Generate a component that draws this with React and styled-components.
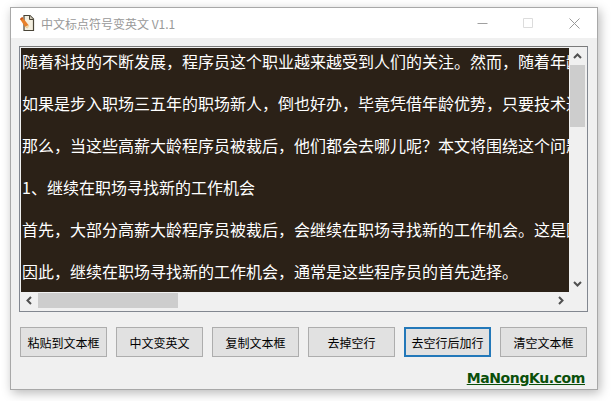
import React from "react";
import styled, { createGlobalStyle } from "styled-components";

const Global = createGlobalStyle`
  html, body { margin: 0; padding: 0; background: #fff; }
  body { width: 613px; height: 401px; overflow: hidden; }
`;

const cjk = `"Noto Sans CJK SC", "Liberation Sans", sans-serif`;

const Page = styled.div`
  width: 613px;
  height: 401px;
  padding: 7px 0 0 10px;
  box-sizing: border-box;
`;

const Win = styled.div`
  width: 588px;
  height: 383px;
  box-sizing: border-box;
  border: 1px solid #a8a8a8;
  background: #f0f0f0;
  box-shadow: 2px 3px 10px rgba(0, 0, 0, 0.28);
  display: flex;
  flex-direction: column;
`;

const TitleBar = styled.div`
  height: 30px;
  background: #fff;
  display: flex;
  align-items: center;
  padding-left: 8px;
  flex-shrink: 0;
`;

const Title = styled.span`
  font-family: ${cjk};
  font-size: 12px;
  color: #999;
  margin-left: 6px;
  flex: 1;
`;

const WinBtn = styled.div`
  width: 46px;
  height: 30px;
  display: flex;
  align-items: center;
  justify-content: center;
  color: #999;
`;

const Body = styled.div`
  flex: 1;
  padding: 8px 9px 0 8px;
  display: flex;
  flex-direction: column;
`;

const TextBox = styled.div`
  height: 266px;
  box-sizing: border-box;
  border: 1px solid #828790;
  border-top-color: #7a7a7a;
  padding: 1px;
  display: grid;
  grid-template-columns: 548px 17px;
  grid-template-rows: 244px 17px;
  background: #f0f0f0;
`;

const Content = styled.div`
  background: #2b2117;
  color: #fff;
  overflow: hidden;
  padding: 0 0 0 1px;
  font-family: ${cjk};
  font-size: 16px;
  line-height: 42px;
  white-space: nowrap;
`;

const Line = styled.div`
  height: 42px;
  &:first-child {
    margin-top: -8px;
  }
`;

const VBar = styled.div`
  display: flex;
  flex-direction: column;
  align-items: center;
  background: #f0f0f0;
`;

const HBar = styled.div`
  display: flex;
  background: #f0f0f0;
`;

const Arrow = styled.div`
  width: 17px;
  height: 17px;
  flex-shrink: 0;
  display: flex;
  align-items: center;
  justify-content: center;
`;

const VThumb = styled.div`
  width: 15px;
  height: 62px;
  background: #cdcdcd;
`;

const HThumb = styled.div`
  width: 140px;
  height: 15px;
  margin-top: 1px;
  background: #cdcdcd;
`;

const Spacer = styled.div`
  flex: 1;
`;

const Buttons = styled.div`
  display: flex;
  gap: 9px;
  margin-top: 15px;
  padding-left: 1px;
`;

const Btn = styled.div`
  width: 87px;
  height: 30px;
  box-sizing: border-box;
  border: ${(p) => (p.$focus ? "2px solid #2378b9" : "1px solid #adadad")};
  background: #e1e1e1;
  display: flex;
  align-items: center;
  justify-content: center;
  font-family: ${cjk};
  font-size: 12px;
  color: #000;
`;

const Footer = styled.div`
  margin-top: 12px;
  text-align: right;
  padding-right: 3px;
`;

const Brand = styled.span`
  font-family: "DejaVu Sans", sans-serif;
  font-size: 14px;
  font-weight: bold;
  color: #0a4f0a;
  text-decoration: underline;
  letter-spacing: -0.4px;
`;

const Chevron = ({ d }) => (
  <svg width="9" height="9" viewBox="0 0 9 9" fill="none" stroke="#505050" strokeWidth="2">
    <path d={d} />
  </svg>
);

const AppIcon = () => (
  <svg width="16" height="18" viewBox="0 0 16 18">
    <path d="M5 1.5h6l3.5 3.5v11.5H5z" fill="#f4efe0" stroke="#4a4538" strokeWidth="1.2" />
    <path d="M10.5 1.5v4h4" fill="#cfc9b8" stroke="#4a4538" strokeWidth="1" />
    <path d="M1 5l2.2-2 6.3 8-.6 3.2-3-1.4z" fill="#e8802a" />
    <path d="M5.9 12.8l3 1.4.6-3.2z" fill="#f1d6a2" />
    <path d="M1 5l2.2-2 1 1.3-2.2 2z" fill="#c9541c" />
  </svg>
);

const lines = [
  "随着科技的不断发展，程序员这个职业越来越受到人们的关注。然而，随着年龄的增长",
  "如果是步入职场三五年的职场新人，倒也好办，毕竟凭借年龄优势，只要技术过硬",
  "那么，当这些高薪大龄程序员被裁后，他们都会去哪儿呢？本文将围绕这个问题展开",
  "1、继续在职场寻找新的工作机会",
  "首先，大部分高薪大龄程序员被裁后，会继续在职场寻找新的工作机会。这是因为",
  "因此，继续在职场寻找新的工作机会，通常是这些程序员的首先选择。",
];

const labels = ["粘贴到文本框", "中文变英文", "复制文本框", "去掉空行", "去空行后加行", "清空文本框"];

export default function App() {
  return (
    <Page>
      <Global />
      <Win>
        <TitleBar>
          <AppIcon />
          <Title>中文标点符号变英文 V1.1</Title>
          <WinBtn>
            <svg width="11" height="11" viewBox="0 0 11 11" stroke="#a0a0a0">
              <path d="M0.5 5.5h10" />
            </svg>
          </WinBtn>
          <WinBtn>
            <svg width="11" height="11" viewBox="0 0 11 11" fill="none" stroke="#dcdcdc">
              <path d="M.5.5h9v9h-9z" />
            </svg>
          </WinBtn>
          <WinBtn>
            <svg width="11" height="11" viewBox="0 0 11 11" stroke="#999">
              <path d="M.5.5l10 10M10.5.5l-10 10" />
            </svg>
          </WinBtn>
        </TitleBar>
        <Body>
          <TextBox>
            <Content>
              {lines.map((l) => (
                <Line key={l}>{l}</Line>
              ))}
            </Content>
            <VBar>
              <Arrow>
                <Chevron d="M1 6l3.5-3.5L8 6" />
              </Arrow>
              <VThumb />
              <Spacer />
              <Arrow>
                <Chevron d="M1 3l3.5 3.5L8 3" />
              </Arrow>
            </VBar>
            <HBar>
              <Arrow>
                <Chevron d="M6 1L2.5 4.5 6 8" />
              </Arrow>
              <HThumb />
              <Spacer />
              <Arrow>
                <Chevron d="M3 1l3.5 3.5L3 8" />
              </Arrow>
            </HBar>
            <div />
          </TextBox>
          <Buttons>
            {labels.map((l) => (
              <Btn key={l} $focus={l === "去空行后加行"}>
                {l}
              </Btn>
            ))}
          </Buttons>
          <Footer>
            <Brand>MaNongKu.com</Brand>
          </Footer>
        </Body>
      </Win>
    </Page>
  );
}
